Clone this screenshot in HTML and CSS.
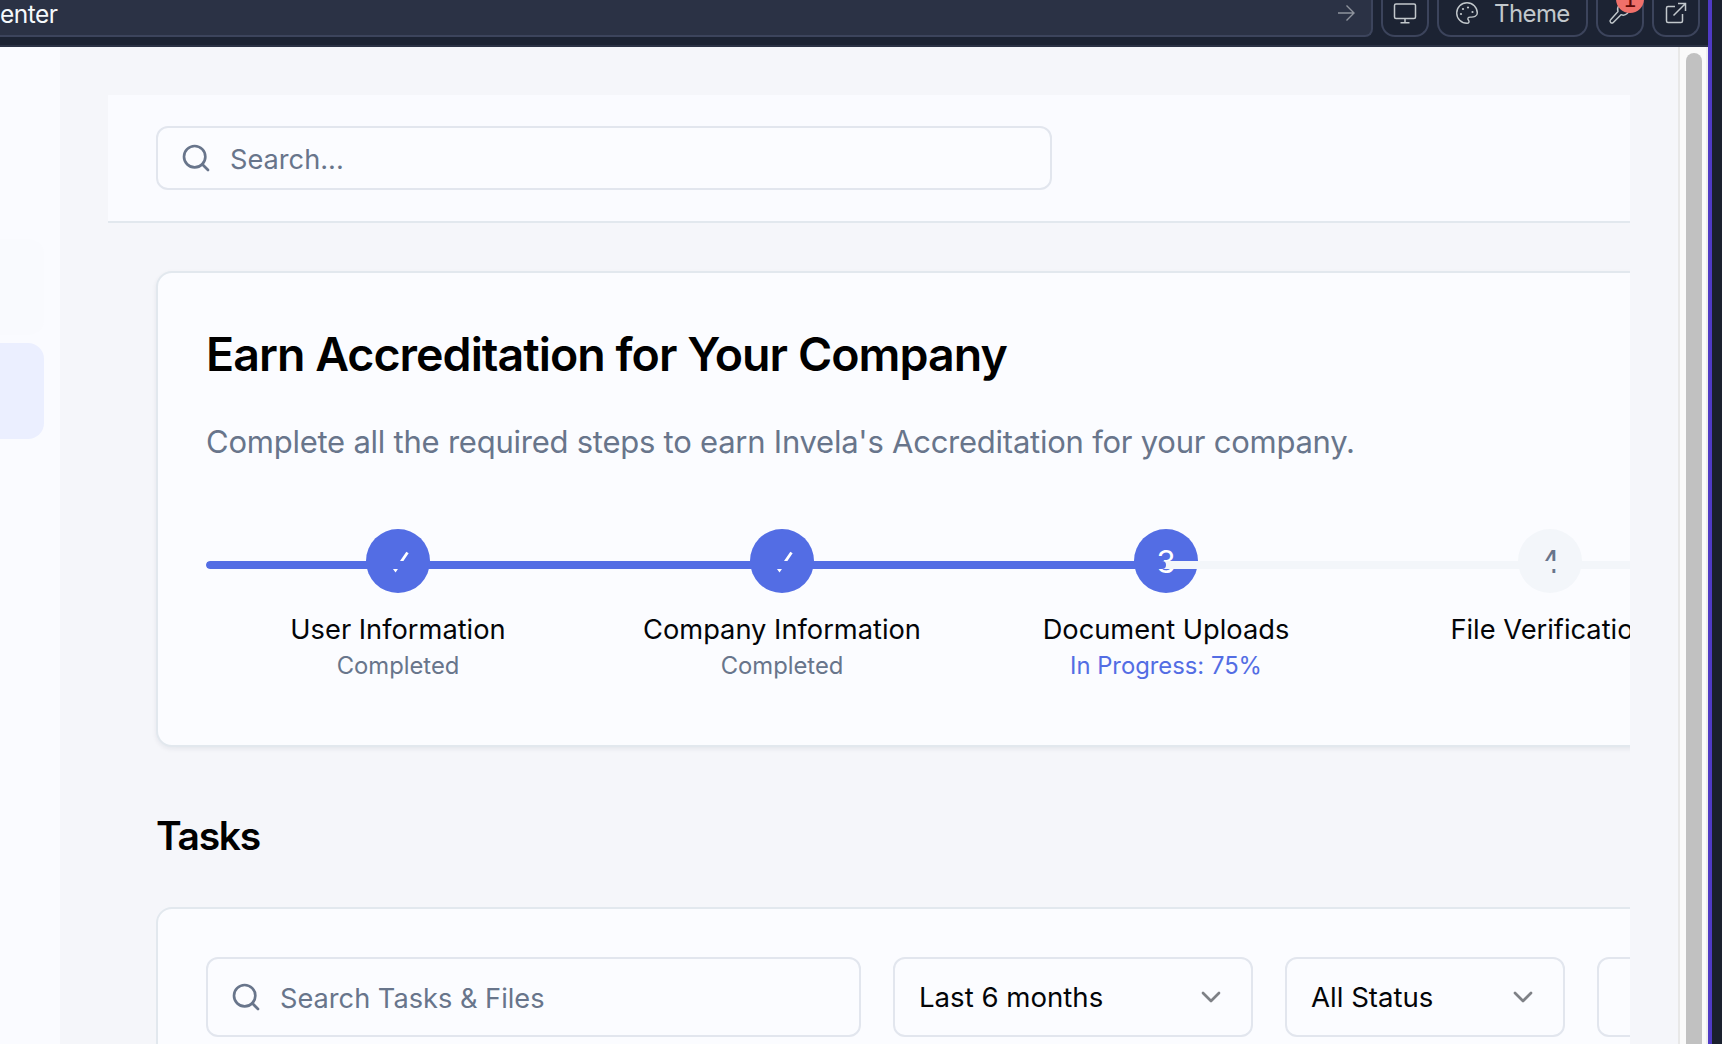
FILE: index.html
```html
<!DOCTYPE html>
<html lang="en">
<head>
<meta charset="utf-8">
<title>Task Center</title>
<link rel="stylesheet" href="styles.css">
</head>
<body>
<div class="window">
  <div class="frame">
    <header class="toolbar">
      <div class="address">
        <span class="address-text">enter</span>
        <svg class="go" viewBox="0 0 18 18" fill="none" stroke="currentColor" stroke-width="1.4"><path d="M1 9h15.5M9.5 1.5 17 9l-7.500 7.500"/></svg>
      </div>
      <button class="tool"><svg width="24" height="24" viewBox="0 0 24 24" fill="none" stroke="currentColor" stroke-width="1.5"><rect x="1.500" y="3" width="21" height="14.500" rx="1.500"/><path d="M12 17.500v4M7.500 21.700h9"/></svg></button>
      <button class="tool theme"><svg width="24" height="24" viewBox="0 0 24 24" fill="none" stroke="currentColor" stroke-width="1.400"><path d="M12 22.300A10.300 10.300 0 1 1 22.300 12c0 3.600-3.600 4.300-7 4.100-2.300-.1-3.200 1.500-1.800 3.200 1.200 1.500.3 3-1.500 3Z"/><g fill="currentColor" stroke="none"><circle cx="6" cy="13" r="1.100"/><circle cx="8" cy="8" r="1.100"/><circle cx="13" cy="6.500" r="1.100"/><circle cx="17.500" cy="11" r="1.100"/></g></svg><span class="theme-label">Theme</span></button>
      <button class="tool"><svg width="24" height="24" viewBox="0 0 24 24" fill="none" stroke="currentColor" stroke-width="1.400" stroke-linejoin="round"><path d="M21 6.500l-4 3-3-3 3-4a6 6 0 0 0-7 8L2.600 18.800a1.800 1.800 0 0 0 2.700 2.600L13 13.700a6 6 0 0 0 8-7.200Z"/></svg><span class="badge">1</span></button>
      <button class="tool"><svg width="24" height="24" viewBox="0 0 24 24" fill="none" stroke="currentColor" stroke-width="1.500"><path d="M11 5.500H4a1.500 1.500 0 0 0-1.500 1.500v13A1.500 1.500 0 0 0 4 21.500h13a1.500 1.500 0 0 0 1.500-1.500v-7M14 2.500h7.500V10M21.500 2.500 9.500 14.500"/></svg></button>
    </header>
    <div class="viewport">
      <aside class="sidebar">
        <div class="nav-item"></div>
        <div class="nav-item active"></div>
      </aside>
      <main class="main">
        <div class="page-header">
          <div class="field global-search">
            <svg class="search-icon" viewBox="0 0 24 24"><circle cx="11" cy="11" r="8"/><path d="m21 21-4.300-4.300"/></svg>
            <span class="label">Search...</span>
          </div>
        </div>
        <section class="card accreditation">
          <h1>Earn Accreditation for Your Company</h1>
          <p class="subtitle">Complete all the required steps to earn Invela's Accreditation for your company.</p>
          <div class="steps">
            <div class="step"><div class="dot"><svg class="check" viewBox="0 0 24 24"><path d="M4.500 14.500 9.500 21 21.500 3.500"/></svg></div><div class="name">User Information</div><div class="state">Completed</div></div>
            <div class="step"><div class="dot"><svg class="check" viewBox="0 0 24 24"><path d="M4.500 14.500 9.500 21 21.500 3.500"/></svg></div><div class="name">Company Information</div><div class="state">Completed</div></div>
            <div class="step"><div class="dot">3</div><div class="name">Document Uploads</div><div class="state current">In Progress: 75%</div></div>
            <div class="step"><div class="dot pending">4</div><div class="name">File Verification</div></div>
            <div class="track"><div class="fill"></div></div>
          </div>
        </section>
        <h2>Tasks</h2>
        <section class="card tasks">
          <div class="field task-search">
            <svg class="search-icon" viewBox="0 0 24 24"><circle cx="11" cy="11" r="8"/><path d="m21 21-4.300-4.300"/></svg>
            <span class="label">Search Tasks &amp; Files</span>
          </div>
          <div class="field select period"><span>Last 6 months</span><svg class="chevron" viewBox="0 0 20 12"><path d="m2 2 8 8 8-8"/></svg></div>
          <div class="field select status"><span>All Status</span><svg class="chevron" viewBox="0 0 20 12"><path d="m2 2 8 8 8-8"/></svg></div>
          <div class="field select extra"></div>
        </section>
      </main>
      <div class="scrollbar"><div class="thumb"></div></div>
    </div>
  </div>
</div>
</body>
</html>
```
FILE: styles.css
```css
* { box-sizing: border-box; }
body { margin: 0; font-family: Inter, "Liberation Sans", sans-serif; color: #030508; }
h1, h2, p { margin: 0; }
button { font: inherit; }
svg { flex: none; display: block; }

.window { width: 1722px; height: 1044px; overflow: hidden; background: #1a202e; }
.frame { width: 1712px; height: 1044px; border-right: 4px solid #4f3ac6; display: flex; flex-direction: column; }

.toolbar { flex: none; height: 47px; padding-right: 8px; background: #1c2333; border-bottom: 2px solid #2b3245; display: flex; align-items: flex-start; gap: 8px; }
.address { width: 1373px; height: 37px; background: #2b3245; border: 2px solid #3c445c; border-left: 0; border-top: 0; border-radius: 0 0 8px 0; display: flex; align-items: flex-start; justify-content: space-between; padding: 0 16px 0 0; color: #f5f9fc; }
.address-text { font-size: 24.500px; line-height: 28px; letter-spacing: -.5px; }
.go { width: 18px; height: 18px; margin-top: 4px; color: #8f949d; }
.tool { position: relative; width: 48px; height: 37px; padding: 0; border: 2px solid #3c445c; border-top: 0; border-radius: 0 0 14px 14px; background: none; color: #c2c8cc; display: flex; align-items: flex-start; justify-content: center; }
.tool > svg { margin-top: 1px; }
.theme { width: 151px; justify-content: flex-start; padding-left: 16px; gap: 15px; }
.theme-label { font-size: 24px; line-height: 28px; letter-spacing: -.6px; }
.badge { position: absolute; left: 18px; top: -15px; width: 28px; height: 28px; border-radius: 50%; background: #f0706a; color: #5c0a06; font: 22px/29px "DejaVu Sans", sans-serif; text-align: center; }

.viewport { flex: 1; min-height: 0; display: flex; background: #f5f6fa; }
.sidebar { flex: none; width: 60px; background: #fafbff; padding-top: 192px; display: flex; flex-direction: column; gap: 8px; }
.nav-item { width: 44px; height: 96px; border-radius: 0 16px 16px 0; background: #f9fafe; }
.nav-item.active { background: #ebefff; }

.main { flex: none; width: 1522px; margin: 48px 48px 0; overflow: hidden; }
.page-header { height: 128px; background: #fafbff; border-bottom: 2px solid #e2e8ee; padding: 31px 48px 0; }
.field { flex: none; display: flex; align-items: center; border: 2px solid #e2e6ee; border-radius: 12px; background: #fbfcff; font-size: 27.600px; color: #68758b; }
.label { margin-top: 2px; font-size: 27.200px; }
.global-search { width: 896px; height: 64px; padding-left: 22px; gap: 18px; }
.search-icon { width: 32px; height: 32px; fill: none; stroke: #68758b; stroke-width: 2; stroke-linecap: round; }

.card { width: 1632px; margin-left: 48px; background: #fbfcff; border: 2px solid #e2e8ee; border-radius: 16px; }
.accreditation { height: 476px; margin-top: 48px; padding: 47px 48px; box-shadow: 0 2px 5px rgba(20, 30, 50, .07); }
h1 { height: 68px; font-size: 46.500px; line-height: 68px; letter-spacing: -.96px; font-weight: 600; white-space: nowrap; color: #000; }
.subtitle { margin-top: 32px; height: 44px; font-size: 31px; line-height: 44px; letter-spacing: -.24px; white-space: nowrap; color: #68758b; }
.steps { position: relative; width: 1536px; margin-top: 65px; display: grid; grid-template-columns: repeat(4, 384px); }
.step { display: flex; flex-direction: column; align-items: center; }
.dot { width: 64px; height: 64px; border-radius: 50%; background: #536de4; color: #fff; font-size: 31px; display: flex; align-items: center; justify-content: center; }
.dot.pending { background: #f3f6fa; color: #68758b; }
.check { width: 24px; height: 24px; fill: none; stroke: #fff; stroke-width: 2.800; }
.name { margin-top: 17px; font-size: 27.250px; line-height: 40px; white-space: nowrap; }
.state { font-size: 23.800px; line-height: 32px; color: #68758b; }
.state.current { color: #536de4; }
.track { position: absolute; left: 0; top: 32px; width: 1536px; height: 8px; border-radius: 4px; background: #f3f6fa; overflow: hidden; }
.fill { width: 62.500%; height: 8px; border-radius: 4px; background: #536de4; }

h2 { margin: 61px 0 0 48px; height: 56px; font-size: 39px; line-height: 56px; letter-spacing: -1.300px; font-weight: 600; color: #000; }
.tasks { height: 240px; margin-top: 43px; padding: 48px; display: flex; align-items: flex-start; gap: 32px; }
.tasks .field { height: 80px; }
.task-search { width: 655px; padding-left: 22px; gap: 18px; }
.select { color: #030508; justify-content: space-between; padding: 0 30px 0 24px; }
.period { width: 360px; }
.status { width: 280px; }
.extra { width: 280px; }
.chevron { width: 20px; height: 12px; fill: none; stroke: #7e8186; stroke-width: 2.700; stroke-linecap: round; stroke-linejoin: round; }

.scrollbar { flex: none; width: 30px; background: #fafafa; border-left: 2px solid #e8e8e8; border-right: 2px solid #ededed; padding: 6px 4px 0 6px; }
.thumb { width: 16px; height: 991px; border-radius: 8px 8px 0 0; background: #c1c1c1; }
```
